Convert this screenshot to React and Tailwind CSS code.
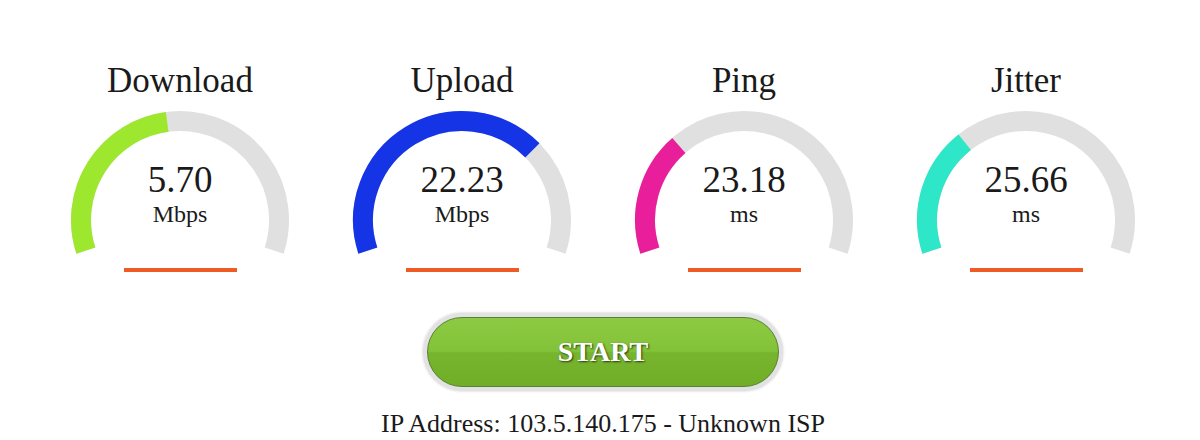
const gauges = [
  { title: 'Download', value: '5.70', unit: 'Mbps', amount: 0.4655, color: '#9de82f' },
  { title: 'Upload', value: '22.23', unit: 'Mbps', amount: 0.7098, color: '#1534e6' },
  { title: 'Ping', value: '23.18', unit: 'ms', amount: 0.3095, color: '#e91e9b' },
  { title: 'Jitter', value: '25.66', unit: 'ms', amount: 0.323, color: '#2ee6c8' },
]

// canvas-style angles: start at -1.1π, full sweep 1.2π
function arcPath(cx, cy, r, from, to) {
  const a0 = -1.1 * Math.PI + from * 1.2 * Math.PI
  const a1 = -1.1 * Math.PI + to * 1.2 * Math.PI
  const x0 = cx + r * Math.cos(a0)
  const y0 = cy + r * Math.sin(a0)
  const x1 = cx + r * Math.cos(a1)
  const y1 = cy + r * Math.sin(a1)
  const large = (to - from) * 1.2 * Math.PI > Math.PI ? 1 : 0
  return `M ${x0} ${y0} A ${r} ${r} 0 ${large} 1 ${x1} ${y1}`
}

function Gauge({ title, value, unit, amount, color }) {
  return (
    <div className="w-[282px] flex flex-col items-center">
      <div className="text-[35px] leading-none text-[#1a1a1a]">{title}</div>
      <div className="relative w-[220px] h-[150px] mt-[12px]">
        <svg width="220" height="150" viewBox="0 0 220 150" className="block">
          <path d={arcPath(110, 110, 99, 0, 1)} fill="none" stroke="#e0e0e0" strokeWidth="20" />
          <path d={arcPath(110, 110, 99, 0, amount)} fill="none" stroke={color} strokeWidth="20" />
        </svg>
        <div className="absolute left-0 right-0 top-[51px] flex flex-col items-center text-[#1a1a1a]">
          <div className="text-[37px] leading-none">{value}</div>
          <div className="text-[24px] leading-none mt-[4px]">{unit}</div>
        </div>
      </div>
      <div className="w-[113px] h-[4px] bg-[#ee5b24] mt-[8px]"></div>
    </div>
  )
}

export default function App() {
  return (
    <div className="w-[1200px] h-[440px] bg-white overflow-hidden font-['Liberation_Serif','Times_New_Roman',serif]">
      <div className="flex justify-center pt-[63px] pl-[6px]">
        {gauges.map((g) => (
          <Gauge key={g.title} {...g} />
        ))}
      </div>
      <div className="flex justify-center mt-[41px] pl-[6px]">
        <div className="rounded-full p-[4px] bg-[#e2e2e2] shadow-[0_0_2px_1px_#e6e6e6]">
          <button className="w-[352px] h-[70px] rounded-full border border-[#5b7f33] bg-[linear-gradient(to_bottom,#8dca43_0%,#82c238_49%,#78b52e_51%,#70ae28_100%)] text-white font-bold text-[28px] leading-none [text-shadow:1px_1px_2px_rgba(0,0,0,0.7)]">
            START
          </button>
        </div>
      </div>
      <div className="text-center text-[26px] leading-none text-[#1a1a1a] mt-[20px] pl-[6px]">
        IP Address: 103.5.140.175 - Unknown ISP
      </div>
    </div>
  )
}
